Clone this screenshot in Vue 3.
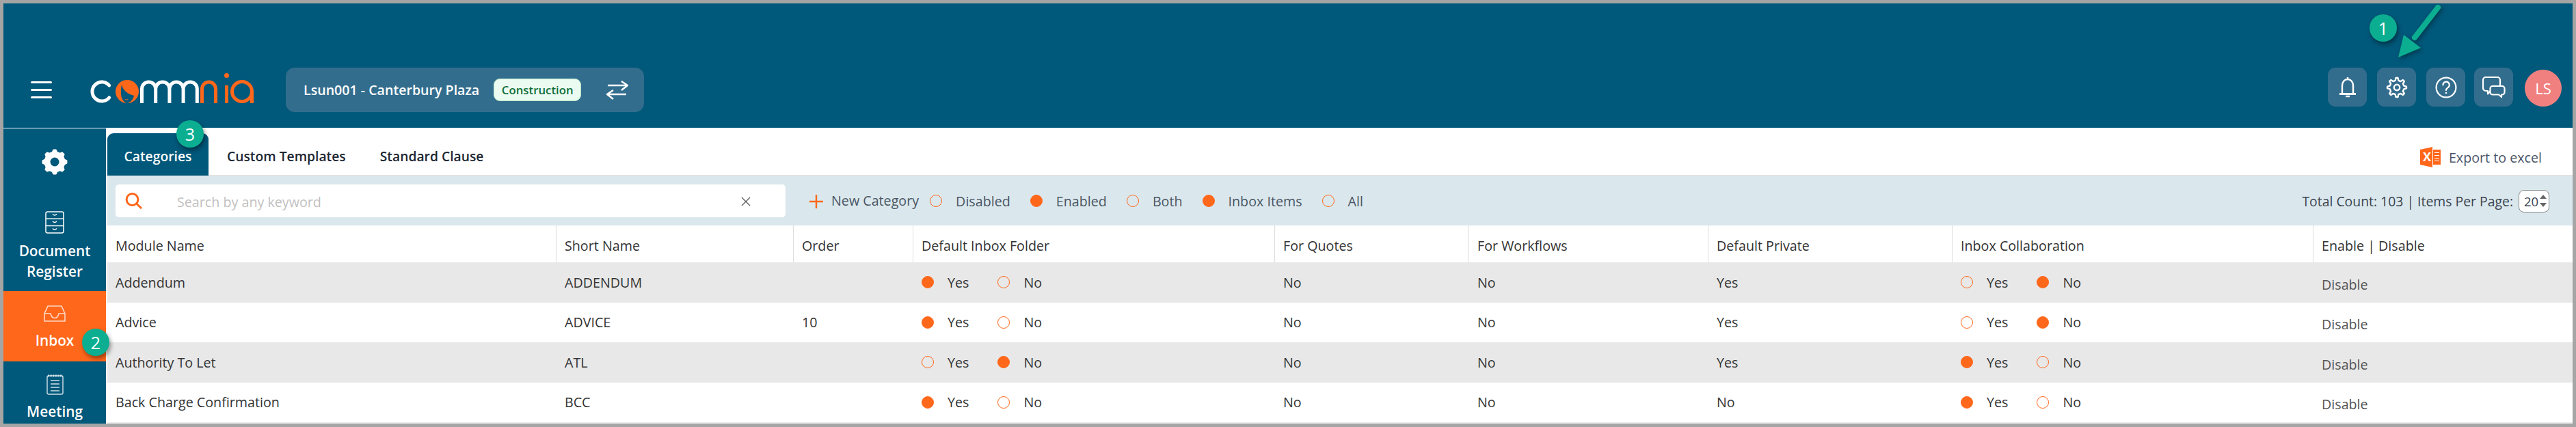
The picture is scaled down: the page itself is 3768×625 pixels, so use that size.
<script setup>
const gear = (teeth, outer, root, cx, cy) => {
  const pts = []
  const step = (Math.PI * 2) / teeth
  for (let i = 0; i < teeth; i++) {
    const a = i * step - Math.PI / 2
    const w = step * 0.2
    const o = step * 0.13
    const list = [
      [root, a - w - o * 0.7],
      [outer, a - o],
      [outer, a + o],
      [root, a + w + o * 0.7]
    ]
    for (const [r, t] of list) pts.push(`${(cx + r * Math.cos(t)).toFixed(2)} ${(cy + r * Math.sin(t)).toFixed(2)}`)
  }
  return 'M' + pts.join('L') + 'Z'
}
const sideGear = gear(8, 17.5, 14.5, 20, 20)
const headGear = gear(8, 14, 10.5, 16, 16)

const filters = [
  { label: 'Disabled', on: false },
  { label: 'Enabled', on: true },
  { label: 'Both', on: false },
  { label: 'Inbox Items', on: true },
  { label: 'All', on: false }
]
const heads = ['Module Name', 'Short Name', 'Order', 'Default Inbox Folder', 'For Quotes', 'For Workflows', 'Default Private', 'Inbox Collaboration', 'Enable | Disable']
const rows = [
  { name: 'Addendum', short: 'ADDENDUM', order: '', inbox: true, quotes: 'No', flows: 'No', priv: 'Yes', collab: false },
  { name: 'Advice', short: 'ADVICE', order: '10', inbox: true, quotes: 'No', flows: 'No', priv: 'Yes', collab: false },
  { name: 'Authority To Let', short: 'ATL', order: '', inbox: false, quotes: 'No', flows: 'No', priv: 'Yes', collab: true },
  { name: 'Back Charge Confirmation', short: 'BCC', order: '', inbox: true, quotes: 'No', flows: 'No', priv: 'No', collab: true }
]
</script>

<template>
  <div class="frame">
    <header class="top">
      <div class="burger"><span></span><span></span><span></span></div>
      <svg class="logo" width="242" height="46" viewBox="0 0 242 46" fill="none" stroke-width="5">
        <path d="M28.7 18A14 14 0 1 0 28.7 36" stroke="#fff" stroke-linecap="round" />
        <circle cx="55" cy="27" r="17" fill="#ff671b" />
        <path d="M47 17C49 26 57 31 65 33C64 38 60 43 55 44C50 43 46 37 46 30C46 25 46 21 47 17Z" fill="#00587a" />
        <path d="M52 38.5q2 1.5 4 0" stroke="#ff671b" stroke-width="1" />
        <path d="M76.5 44V23A10.1 10.1 0 0 1 96.7 23V44M96.7 23A10.1 10.1 0 0 1 116.9 23V44M116.9 23A10.1 10.1 0 0 1 137.1 23V44M137.1 23A10.1 10.1 0 0 1 157.3 23V44" stroke="#fff" />
        <path d="M164.5 44V23A10 10 0 0 1 184.5 23V44M200.5 18V44M237.5 27V44" stroke="#ff671b" />
        <circle cx="223" cy="27" r="14.5" stroke="#ff671b" />
        <circle cx="200.5" cy="3.5" r="3.5" fill="#ff671b" />
      </svg>
      <div class="project">
        <span class="project-name">Lsun001 - Canterbury Plaza</span>
        <span class="stage">Construction</span>
        <svg class="swap" width="32" height="28" viewBox="0 0 32 28" fill="none" stroke="#fff" stroke-width="2.5">
          <path d="M2 7H30M22 1L31 7L22 14" />
          <path d="M29 20H2M10 14L1 20L10 27" />
        </svg>
      </div>
      <div class="actions">
        <button class="act">
          <svg width="26" height="31" viewBox="0 0 26 31" fill="none" stroke="#fff" stroke-width="2.4">
            <path d="M13 1V4M5 25V13A8 9 0 0 1 21 13V25" />
            <path d="M1 25.5H25" stroke-width="2.8" />
            <path d="M10 29H16" stroke-width="2.4" />
          </svg>
        </button>
        <button class="act">
          <svg width="32" height="32" viewBox="0 0 32 32" fill="none" stroke="#fff" stroke-width="2.4" stroke-linejoin="round">
            <path :d="headGear" />
            <circle cx="16" cy="16" r="4.2" />
          </svg>
        </button>
        <button class="act">
          <svg width="32" height="32" viewBox="0 0 32 32" fill="none" stroke="#fff" stroke-width="2.2" stroke-linecap="round">
            <circle cx="16" cy="16" r="14.4" />
            <path d="M11.5 12.5A4.6 4.6 0 1 1 18.5 16.3C16.8 17.4 16 18 16 20" />
            <circle cx="16" cy="24" r="1.3" fill="#fff" stroke="none" />
          </svg>
        </button>
        <button class="act act-chat">
          <svg width="34" height="31" viewBox="0 0 34 31" fill="none" stroke="#fff" stroke-width="2.2" stroke-linejoin="round">
            <path d="M5 1H22A4 4 0 0 1 26 5V17A4 4 0 0 1 22 21H12L8 25.5V21H5A4 4 0 0 1 1 17V5A4 4 0 0 1 5 1Z" />
            <path d="M15 14H29A3.5 3.5 0 0 1 32.5 17.5V23A3.5 3.5 0 0 1 29 26.5H28V30L24 26.5H15A3.5 3.5 0 0 1 11.5 23V17.5A3.5 3.5 0 0 1 15 14Z" fill="#336d8d" />
          </svg>
        </button>
        <div class="avatar">LS</div>
      </div>
      <div class="step step-one">1</div>
      <svg class="pointer" width="72" height="90" viewBox="0 0 72 90">
        <path d="M60 6L26 50" stroke="#0bae90" stroke-width="8" stroke-linecap="round" />
        <path d="M2 79L10 46L35 65Z" fill="#0bae90" />
      </svg>
    </header>

    <div class="body">
      <nav class="side">
        <div class="side-gear">
          <svg width="40" height="40" viewBox="0 0 40 40">
            <path :d="sideGear" fill="#fff" stroke="#fff" stroke-width="2" stroke-linejoin="round" />
            <circle cx="20" cy="20" r="6.5" fill="#00587a" />
          </svg>
        </div>
        <div class="side-item item-doc">
          <svg width="28" height="33" viewBox="0 0 28 33" fill="none" stroke="#fff" stroke-width="1.5">
            <rect x="1" y="1" width="26" height="31" rx="2.5" />
            <path d="M1 11.3H27M1 21.6H27" />
            <path d="M11 4.5q3 3 6 0M11 15q3 3 6 0M11 25.5q3 3 6 0" />
          </svg>
          <span>Document<br />Register</span>
        </div>
        <div class="side-item item-inbox">
          <svg width="32" height="24" viewBox="0 0 32 24" fill="none" stroke="#ffd9c4" stroke-width="1.6">
            <path d="M1 12V23H31V12L26 1H6Z" />
            <path d="M1 12H10C11 17 13 18.5 16 18.5S21 17 22 12H31" />
          </svg>
          <span>Inbox</span>
          <div class="step step-two">2</div>
        </div>
        <div class="side-item item-meet">
          <svg width="25" height="30" viewBox="0 0 25 30" fill="none" stroke="#d2e1e8" stroke-width="1.4">
            <rect x="1" y="2" width="23" height="27" rx="2" />
            <path d="M2 2H23" stroke-width="3" stroke-dasharray="2 1.6" />
            <path d="M6 9H19M6 14H19M6 19H19M6 24H19" />
          </svg>
          <span>Meeting</span>
        </div>
      </nav>

      <main class="main">
        <div class="tabs">
          <div class="tab active">Categories<div class="step step-three">3</div></div>
          <div class="tab">Custom Templates</div>
          <div class="tab">Standard Clause</div>
          <div class="export">
            <svg width="30" height="30" viewBox="0 0 30 30">
              <path d="M0 4L18 0V30L0 26Z" fill="#ff671b" />
              <path d="M19 4H30V26H19Z" fill="#ff671b" />
              <path d="M21 8.5H28M21 12.5H28M21 16.5H28M21 20.5H28" stroke="#fff" stroke-width="1.2" />
              <text x="4" y="21" class="excel-x">X</text>
            </svg>
            <span>Export to excel</span>
          </div>
        </div>

        <div class="toolbar">
          <div class="search">
            <svg width="26" height="24" viewBox="0 0 26 24" fill="none" stroke="#ff671b" stroke-width="3">
              <circle cx="10.5" cy="10" r="8.4" />
              <path d="M16.5 16L24 23" />
            </svg>
            <span class="placeholder">Search by any keyword</span>
            <svg class="clear" width="14" height="14" viewBox="0 0 14 14" stroke="#555" stroke-width="1.2">
              <path d="M1 1L13 13M13 1L1 13" />
            </svg>
          </div>
          <svg class="plus" width="20" height="20" viewBox="0 0 20 20" stroke="#ff671b" stroke-width="2.4">
            <path d="M0 10H20M10 0V20" />
          </svg>
          <span class="new-cat">New Category</span>
          <label v-for="f in filters" :key="f.label" class="filter">
            <i class="radio" :class="{ on: f.on }"></i>{{ f.label }}
          </label>
          <div class="count">
            <span>Total Count: 103 | Items Per Page:</span>
            <div class="spin">
              <span>20</span>
              <div class="arrows"><i class="up"></i><i class="down"></i></div>
            </div>
          </div>
        </div>

        <div class="table">
          <div class="row head">
            <div v-for="h in heads" :key="h" class="cell">{{ h }}</div>
          </div>
          <div v-for="r in rows" :key="r.name" class="row data">
            <div class="cell">{{ r.name }}</div>
            <div class="cell">{{ r.short }}</div>
            <div class="cell">{{ r.order }}</div>
            <div class="cell choice">
              <i class="radio" :class="{ on: r.inbox }"></i><span class="yes">Yes</span>
              <i class="radio" :class="{ on: !r.inbox }"></i><span>No</span>
            </div>
            <div class="cell">{{ r.quotes }}</div>
            <div class="cell">{{ r.flows }}</div>
            <div class="cell">{{ r.priv }}</div>
            <div class="cell choice">
              <i class="radio" :class="{ on: r.collab }"></i><span class="yes">Yes</span>
              <i class="radio" :class="{ on: !r.collab }"></i><span>No</span>
            </div>
            <div class="cell action">Disable</div>
          </div>
        </div>
      </main>
    </div>
  </div>
</template>

<style>
html, body { margin: 0; padding: 0; background: #fff; }
</style>

<style scoped>
.frame {
  box-sizing: border-box;
  width: 3768px;
  height: 625px;
  border: 5px solid #a5a5a5;
  overflow: hidden;
  position: relative;
  background: #fff;
  font-family: "Open Sans", "Noto Sans", sans-serif;
  font-size: 19.7px;
  color: #333;
}
.top {
  height: 182px;
  box-sizing: border-box;
  padding: 94px 16px 23px 40px;
  background: #00587a;
  display: flex;
  align-items: center;
}
.burger { width: 31px; display: flex; flex-direction: column; gap: 8px; }
.burger span { height: 3px; background: #fff; border-radius: 2px; }
.logo { margin-left: 55px; margin-top: -4px; }
.project {
  margin-left: 45px;
  width: 524px;
  height: 65px;
  box-sizing: border-box;
  padding-left: 26px;
  border-radius: 13px;
  background: #336d8d;
  display: flex;
  align-items: center;
  color: #fff;
}
.project-name { font-size: 19.6px; font-weight: 600; white-space: nowrap; }
.stage {
  margin-left: 21px;
  width: 128px;
  height: 33px;
  box-sizing: border-box;
  border: 1px solid #b5e6c4;
  border-radius: 9px;
  background: #ecfbf1;
  color: #0f6f3a;
  font-size: 16.8px;
  font-weight: 600;
  display: flex;
  align-items: center;
  justify-content: center;
}
.swap { margin-left: 37px; }
.actions { margin-left: auto; align-self: flex-start; display: flex; align-items: flex-end; }
.act {
  width: 57px;
  height: 57px;
  border: 0;
  padding: 0;
  border-radius: 11px;
  background: #336d8d;
  display: flex;
  align-items: center;
  justify-content: center;
  margin-right: 15px;
}
.act:nth-child(3) { margin-right: 13px; }
.act-chat { margin-right: 17px; }
.avatar {
  width: 54px;
  height: 54px;
  border-radius: 50%;
  background: #f08080;
  color: #fff;
  font-size: 22px;
  font-weight: 500;
  display: flex;
  align-items: center;
  justify-content: center;
}
.step {
  position: absolute;
  width: 40px;
  height: 40px;
  border-radius: 50%;
  background: #0bae90;
  color: #fff;
  font-size: 25px;
  line-height: 40px;
  text-align: center;
  font-weight: 400;
  box-shadow: 2px 4px 6px rgba(0, 0, 0, 0.4);
  z-index: 3;
}
.step-one { left: 3461px; top: 16px; }
.pointer {
  position: absolute;
  left: 3501px;
  top: 0;
  filter: drop-shadow(2px 3px 3px rgba(0, 0, 0, 0.35));
}
.body { display: flex; height: 433px; }
.side {
  width: 150px;
  margin-top: 1px;
  background: #00587a;
  display: flex;
  flex-direction: column;
  flex-shrink: 0;
  color: #fff;
}
.side-gear { height: 98px; display: flex; align-items: center; justify-content: center; }
.side-item {
  position: relative;
  display: flex;
  flex-direction: column;
  align-items: center;
  text-align: center;
  font-size: 20.8px;
  font-weight: 600;
  line-height: 30px;
}
.item-doc { height: 140px; padding-top: 23px; box-sizing: border-box; }
.item-doc svg { margin-bottom: 10px; }
.item-inbox { height: 103px; padding-top: 21px; box-sizing: border-box; background: #ff671b; }
.item-inbox svg { margin-bottom: 12px; }
.item-meet { padding-top: 19px; }
.item-meet svg { margin-bottom: 9px; }
.step-two { left: 115px; top: 55px; }
.main { flex: 1; min-width: 0; padding-left: 2px; }
.tabs {
  height: 71px;
  box-sizing: border-box;
  padding-top: 8px;
  border-bottom: 2px solid #e2e2e2;
  display: flex;
}
.tab {
  position: relative;
  height: 62px;
  padding: 4px 25px 0;
  display: flex;
  align-items: center;
  font-size: 19.3px;
  font-weight: 600;
  color: #1d2733;
  box-sizing: border-box;
}
.tab:nth-child(2) { padding-left: 27px; }
.tab.active {
  width: 148px;
  padding: 4px 0 0;
  justify-content: center;
  background: #00587a;
  color: #fff;
  border-radius: 9px 9px 0 0;
}
.step-three { left: 101px; top: -19px; }
.export {
  margin-left: auto;
  margin-right: 45px;
  margin-top: 13px;
  display: flex;
  align-items: center;
  gap: 12px;
  height: 44px;
  color: #4a5568;
}
.excel-x { font-size: 18px; font-weight: 700; fill: #fff; }
.toolbar {
  height: 72px;
  box-sizing: border-box;
  padding: 12px 34px 0 12px;
  background: #dae8ed;
  display: flex;
  align-items: flex-start;
}
.search {
  width: 980px;
  height: 48px;
  box-sizing: border-box;
  padding-left: 14px;
  background: #fff;
  border-radius: 5px;
  display: flex;
  align-items: center;
  position: relative;
}
.placeholder { margin-left: 50px; margin-top: 3px; color: #c2bfbf; }
.clear { position: absolute; left: 915px; top: 18px; }
.plus { margin: 15px 0 0 35px; }
.new-cat { margin: 10px 16px 0 12px; color: #4b5563; white-space: nowrap; }
.filter {
  display: flex;
  align-items: center;
  gap: 20px;
  height: 48px;
  margin-right: 29px;
  color: #4b5563;
  white-space: nowrap;
}
.radio {
  width: 18px;
  height: 18px;
  box-sizing: border-box;
  border: 1.5px solid #ff671b;
  border-radius: 50%;
  flex-shrink: 0;
  display: block;
}
.radio.on { background: #ff671b; }
.count { margin-left: auto; display: flex; align-items: center; gap: 8px; margin-top: 8px; font-size: 19.4px; color: #3c4450; }
.spin {
  width: 45px;
  height: 33px;
  box-sizing: border-box;
  padding-left: 7px;
  background: #fff;
  border: 1.5px solid #888;
  border-radius: 8px;
  display: flex;
  align-items: center;
  position: relative;
  font-size: 18.5px;
}
.arrows { position: absolute; right: 3px; top: 6px; display: flex; flex-direction: column; gap: 6px; }
.arrows i { display: block; width: 0; height: 0; border-left: 5px solid transparent; border-right: 5px solid transparent; }
.arrows .up { border-bottom: 6px solid #666; }
.arrows .down { border-top: 6px solid #666; }
.table { background: #ececec; height: 292px; }
.row {
  display: grid;
  grid-template-columns: 656px 347px 175px 529px 284px 350px 357px 528px 380px;
  background: #fff;
}
.head { height: 54px; }
.head .cell { padding-top: 4px; border-left: 1px solid #ddd; }
.head .cell:first-child { border-left: 0; }
.data { height: 58px; }
.data:nth-child(even) { background: #e8e8e8; }
.data:nth-child(2), .data:nth-child(4) { height: 59px; }
.cell {
  box-sizing: border-box;
  padding-left: 12px;
  display: flex;
  align-items: center;
  white-space: nowrap;
  color: #333;
}
.data .cell { padding-left: 13px; padding-bottom: 1px; }
.data .cell:first-child { padding-left: 12px; }
.yes { margin: 0 42px 0 20px; }
.choice .radio + span:last-child { margin-left: 20px; }
.action { color: #555; }
.data .action { padding-top: 5px; padding-bottom: 0; }
</style>
